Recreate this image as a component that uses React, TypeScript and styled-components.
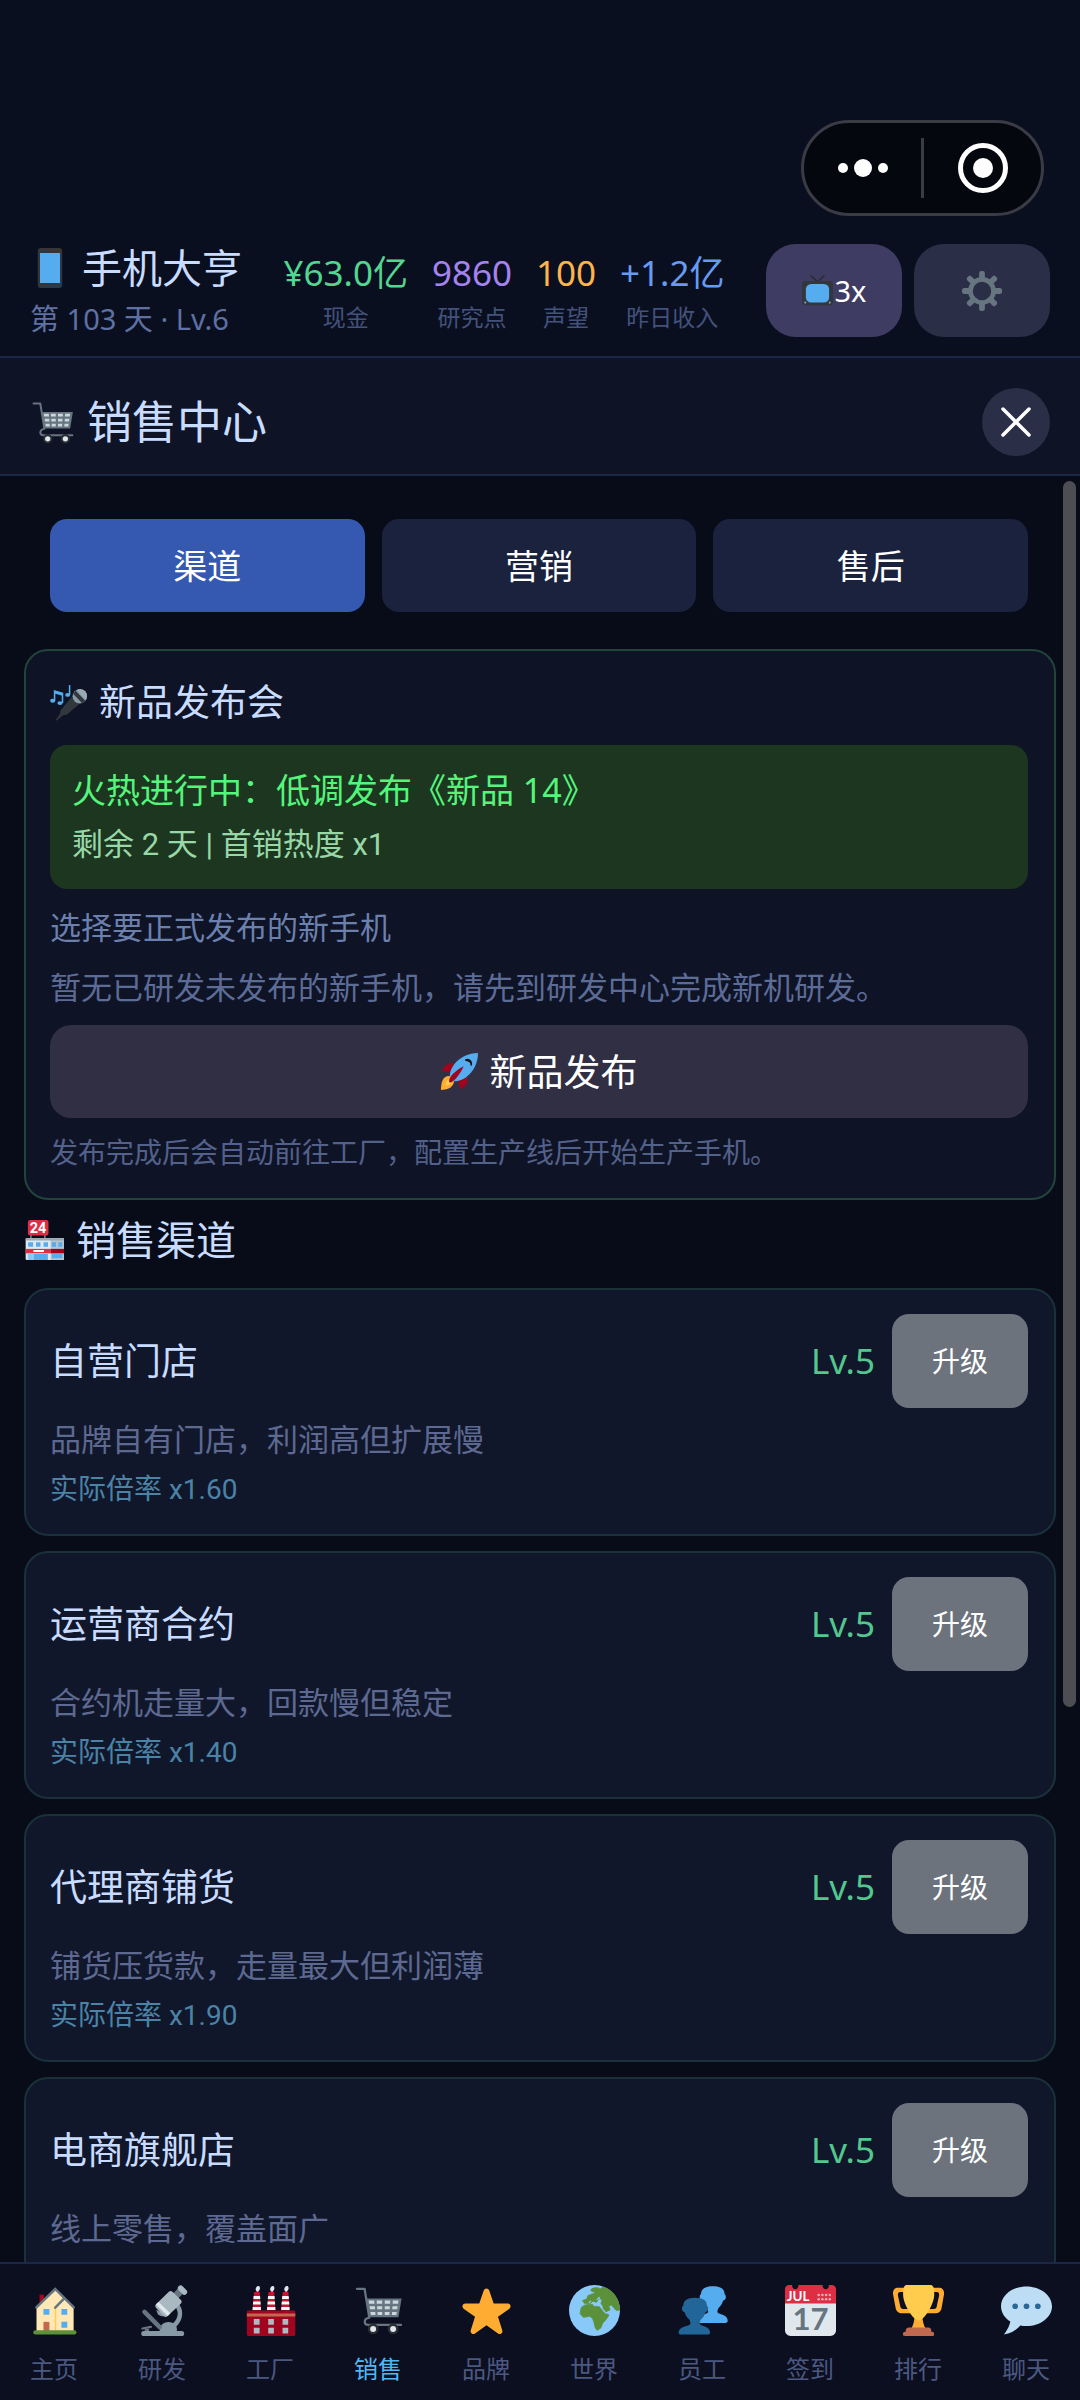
import React, { useState } from "react";
import styled, { createGlobalStyle } from "styled-components";

const GlobalStyle = createGlobalStyle`
  * { box-sizing: border-box; }
  body { margin: 0; background: #080c19; }
  body, button {
    font-family: "Noto Sans", "Noto Sans CJK SC", sans-serif;
    font-weight: 400;
  }
  h1, h2, h3, p { margin: 0; font-weight: 400; }
  button { border: 0; padding: 0; color: #fff; line-height: 44px; cursor: pointer; }
`;

/* ---------- icons ---------- */

const Glyph = styled.svg<{ $size: number }>`
  display: block;
  flex: none;
  width: ${(p) => p.$size}px;
  height: ${(p) => p.$size}px;
`;

type IconProps = { size: number };
type IconType = (p: IconProps) => React.JSX.Element;

const icon =
  (body: React.ReactNode): IconType =>
  ({ size }) => (
    <Glyph $size={size} viewBox="0 0 36 36" aria-hidden="true">
      {body}
    </Glyph>
  );

const PhoneIcon = icon(
  <>
    <rect x="7" y="0" width="22" height="36" rx="3" fill="#31373d" />
    <rect x="9" y="4.500" width="18" height="27" fill="#55acee" />
  </>
);

const TvIcon = icon(
  <>
    <path d="M10.500 1L18 8l7.500-7" stroke="#292f33" strokeWidth="1.800" fill="none" strokeLinecap="round" />
    <rect x="0" y="7" width="36" height="28" rx="4" fill="#31373d" />
    <rect x="4.500" y="10.500" width="27" height="21.500" rx="6" fill="#55acee" />
    <circle cx="3.800" cy="32" r="1.300" fill="#8899a6" />
    <circle cx="32.200" cy="32" r="1.300" fill="#8899a6" />
  </>
);

const GearIcon = icon(
  <>
    <circle cx="18" cy="18" r="10.400" fill="none" stroke="#66757f" strokeWidth="4.200" />
    {[0, 45, 90, 135, 180, 225, 270, 315].map((a) => (
      <rect key={a} x="15.400" y="0" width="5.200" height="8" rx="2" fill="#66757f" transform={`rotate(${a} 18 18)`} />
    ))}
  </>
);

const CartIcon = icon(
  <>
    <path
      d="M2.800 2.700h5.400l3.300 20.400c-2 .3-3.200 1.400-3.200 2.900 0 1.400 1 2.200 2.400 2.200h23.200"
      fill="none"
      stroke="#66757f"
      strokeWidth="1.600"
      strokeLinejoin="round"
      strokeLinecap="round"
    />
    <path d="M9.300 9.500h25l-2.200 13.300H11.300z" fill="#66757f" />
    <g fill="#ccd6dd">
      <path d="M11 11h4l.2 2.200h-3.900zM16.700 11h3.900v2.200h-3.800zM22.400 11h3.900l-.1 2.200h-3.800zM28.100 11h4l-.3 2.200h-3.800z" />
      <path d="M11.700 15h3.700l.2 2.200H12zM17 15h3.600v2.200h-3.500zM22.400 15H26l-.1 2.200h-3.500zM27.900 15h3.600l-.3 2.200h-3.500z" />
      <path d="M12.300 19h3.400l.2 2.200h-3.300zM17.300 19h3.300v2.200h-3.200zM22.400 19h3.400l-.1 2.200h-3.300zM27.600 19h3.300l-.3 2.200h-3.200z" />
    </g>
    <circle cx="14.200" cy="31" r="3.800" fill="#292f33" />
    <circle cx="14.200" cy="31" r="2.100" fill="#e1e8ed" />
    <circle cx="28.300" cy="31" r="3.800" fill="#292f33" />
    <circle cx="28.300" cy="31" r="2.100" fill="#e1e8ed" />
  </>
);

const MicIcon = icon(
  <>
    <path d="M22 11.500l7 7.500-12 10.500c-1.500 1-3 .8-4 .6L6.500 35.700l-.8-.8L10 28.500c-.2-1 0-2.500 1-3.700z" fill="#31373d" />
    <circle cx="29" cy="12" r="7" fill="#8899a6" />
    <path d="M22.500 9.500l2.500-3 9.500 10-3 2.500z" fill="#31373d" />
    <path d="M26 5.800c3-1.800 6.500-.8 8.500 1.400 2 2.400 2 5.800.3 8.300z" fill="#99aab5" />
    <g fill="#55acee">
      <ellipse cx="2.600" cy="16.300" rx="2.500" ry="1.900" />
      <ellipse cx="9.700" cy="18.600" rx="2.500" ry="1.900" />
      <path d="M3.700 5.800l9.200 2.600v10h-1.500v-7.200l-6.200-1.800v7H3.700z" />
      <ellipse cx="17.200" cy="10.600" rx="2.400" ry="1.900" />
      <path d="M18.300 1h1.500v9.600h-1.500z" />
    </g>
  </>
);

const RocketIcon = icon(
  <>
    <path d="M1 17.500C3 12 7 9.500 12.500 9.800L9 19zM18.500 35c5.500-2 8-6 7.700-11.500L17 27z" fill="#a0041e" />
    <path d="M36 0C27 0 18 4 12.500 11.500 9 16.500 8.300 21 8.500 25l2.500 2.500c4 .2 8.500-.5 13.500-4C32 18 36 9 36 0z" fill="#55acee" />
    <path d="M0 36c0-5 .5-12 6-13.500 3.500-.8 7 2.500 6.500 6C11.500 34 5.500 36 0 36z" fill="#ffac33" />
    <path d="M4.500 31.500c0-3.500 1-5.500 3-6 1.800-.3 3.300 1.200 3 3-.6 2-2.500 3-6 3z" fill="#ffcc4d" />
    <path d="M8 28.500c-.5-3 1-5.500 3.500-8 3.200-3 7-6 10.500-7.500-1.500 4-4.200 8-7.300 11.500C12 27.500 10 29 8 28.500z" fill="#a0041e" />
    <path d="M23.800 6.200c3.200-2 7.800 2.200 6.200 5.800-.5 1-1.200 1-1.200 0 0-2.500-1.700-4-4.500-4.200-1 0-1.200-1-.5-1.600z" fill="#101216" />
  </>
);

const StoreIcon = icon(
  <>
    <path d="M5.500 13h1.500v4H5.500zM18 13h1.500v4H18z" fill="#66757f" />
    <rect x="3.500" y="0" width="18.500" height="14" rx="2" fill="#dd2e44" />
    <text x="12.700" y="11.800" textAnchor="middle" fontFamily="Roboto, sans-serif" fontWeight="700" fontSize="13" fill="#fff">
      24
    </text>
    <rect x="1.500" y="16.500" width="34.500" height="19.500" rx="1" fill="#e1e8ed" />
    <path d="M24 16.500h11c.6 0 1 .4 1 1V35c0 .6-.4 1-1 1H24z" fill="#b8c4cc" />
    <path d="M1.500 16.500H36v2H1.500z" fill="#99aab5" />
    <path d="M3.700 20h4.500v4H3.700zM10.800 20h4v4h-4zM17.600 20h4v4h-4zM25 20h3.800v4H25zM31 20h3.500v4H31z" fill="#55acee" />
    <path d="M1.500 26H24v4H1.500z" fill="#dd2e44" />
    <path d="M24 26h12v4H24z" fill="#a0041e" />
    <path d="M8.500 27h9.500v1.800H8.500z" fill="#fff" />
    <path d="M3.500 30.500h4.500V36H3.500z" fill="#88c9f9" />
    <path d="M8.500 30.500h13V36h-13zM25 30.500h9.500V34.500H25z" fill="#55acee" />
  </>
);

const HouseIcon = icon(
  <>
    <path d="M7.400 6.800h3.200V13H7.400z" fill="#a0041e" />
    <path d="M5.300 15L18.500 3l13 12v17.500H5.300z" fill="#ffe8b6" />
    <path d="M18.200 15.500h1v17h-1z" fill="#ffcc4d" />
    <path d="M5.200 15.800L18.500 2.800l13.100 13" fill="none" stroke="#66757f" strokeWidth="1.800" strokeLinecap="round" />
    <path d="M18.500 16l5.900-6" stroke="#66757f" strokeWidth="1.800" strokeLinecap="round" />
    <path d="M10.200 17h4.200v4h-4.200zM22.900 17H27v4h-4.100zM22.900 26H27v4.200h-4.100z" fill="#55acee" />
    <path d="M10.200 26h4.200v6.500h-4.200z" fill="#c1694f" />
    <rect x="3" y="32" width="30.500" height="3" rx="1.500" fill="#5c913b" />
  </>
);

const MicroscopeIcon = icon(
  <>
    <path d="M28.500 14.500c3.500 5.500 1.800 11-4 15.500" fill="none" stroke="#8899a6" strokeWidth="3.200" />
    <path d="M16 33c-.5-4 2.500-6.800 6.200-6.800S29 29 28 33z" fill="#8899a6" />
    <path d="M5.300 19L16 29.700" stroke="#66757f" strokeWidth="3.200" strokeLinecap="round" />
    <path d="M3.800 30.700l6-1.200" stroke="#66757f" strokeWidth="1.600" strokeLinecap="round" />
    <path d="M5.500 31h3v2.500h-3z" fill="#66757f" />
    <path d="M13.500 17.500l1.300 3.300c1.400 1 2.800 1.400 4.400 1.300l1.300-1z" fill="#8899a6" />
    <path d="M26.500 8.500l4-4" stroke="#66757f" strokeWidth="5" />
    <path d="M22.500 4.800c.8-.8 1.800-.8 2.500 0l6 5.700c.7.7.7 1.700 0 2.500l-9.500 9c-.8.8-1.700.7-2.500 0l-5.600-6c-.7-.8-.7-1.600 0-2.400z" fill="#aab8c2" />
    <path d="M15.200 12l8.300 8-1.800 1.800-8.300-8z" fill="#e1e8ed" />
    <path d="M30.800 2.300l2.600 2.600" stroke="#aab8c2" strokeWidth="4" strokeLinecap="round" />
    <rect x="3" y="32.400" width="30.300" height="3.600" rx="1.800" fill="#8899a6" />
  </>
);

const FactoryIcon = icon(
  <>
    {[5.2, 15.4, 25.4].map((x) => (
      <g key={x} transform={`translate(${x} 0)`}>
        <path d="M1.200 5h4L6.100 18H0z" fill="#be1931" />
        <path d="M.9 7.800h4.500l.2 2H.7zM.6 11.700h5.100l.2 2H.4zM.3 15.500H6l.1 2.200H.1z" fill="#f5f8fa" />
        <path d="M3.200 4.800c-1-1-1.200-2.200-.4-3.200C3.600.4 5 .5 5.300 1.800c.3 1.300-.5 2-1.100 3z" fill="#e1e8ed" />
      </g>
    ))}
    <rect x="1.300" y="18" width="34.200" height="18" rx="1" fill="#a0041e" />
    <path d="M1.300 20.200h34.200v2H1.300z" fill="#c1694f" />
    <path d="M6.200 24h4.100v4H6.200zM16.400 24h4v4h-4zM26.500 24h4v4h-4zM6.200 30.200h4.100v4H6.200zM16.400 30.200h4v4h-4zM26.500 30.200h4v4h-4z" fill="#b0b8c2" />
  </>
);

const StarIcon = icon(
  <path
    fill="#ffac33"
    d="M27.287 34.627c-.404 0-.806-.124-1.152-.371L18 28.422l-8.135 5.834c-.343.247-.746.371-1.148.371-.403 0-.806-.124-1.150-.371-.694-.5-.987-1.386-.73-2.198l3.060-9.673-8.082-5.699c-.693-.502-.982-1.392-.72-2.204.261-.812 1.011-1.363 1.859-1.369l9.941-.015L16.120 3.750c.27-.809 1.027-1.350 1.880-1.350s1.610.541 1.880 1.350l3.168 9.348 9.993.015c.852.005 1.602.557 1.863 1.370.261.812-.028 1.701-.718 2.203l-8.083 5.699 3.061 9.674c.257.812-.036 1.698-.73 2.198-.344.246-.744.37-1.147.37z"
  />
);

const GlobeIcon = icon(
  <>
    <circle cx="18" cy="18" r="18" fill="#88c9f9" />
    <g fill="#5c913b" stroke="#5c913b" strokeWidth=".6" strokeLinejoin="round">
      <path d="M8.700 15.800L11.300 14.100l5.200-.5.700 1.400 5.200.5 1.400 3.100 2.300 1.600 2.100 1-2.100 3.300-2.300 2.300-1.400 3.600-2.400 1.600-1.400-1.600-1-4.300-.9-2.300-1.900-1.700-4.700.7-2.300-2.600z" />
      <path d="M15.300 3.300l1.900-1.200 2.800-.2 2.400.7 1.800-1.100C31 3.500 35.600 9.800 35.700 17.800l-2.500.1-1.400-1.700-1.800-2.100-2 .7 1 2.700-3 2-2-2.500V15l-1.500-2 1-2.500-2.800-.6-1.200 2.300-2.600-.8-2.100 1.600-4-.1L9.600 11l2.900-1.100.9-2.400 3.800-1.400 1.400-.9-2.600-.7z" />
    </g>
    <path d="M22 15l4 4.800 2.500-1.200" fill="none" stroke="#88c9f9" strokeWidth=".9" />
    <path d="M19.500 10.500l1.700-1.700 1 2.200M14 12.300l1.500-1" fill="none" stroke="#88c9f9" strokeWidth=".8" />
  </>
);

const person =
  "M16 27.500c0-1.500.5-2.600 1-3.300 1.300-1.100 2.600-3 3.100-5 1-.1 1.900-1.200 1.900-2.400 0-1-.3-1.800-.9-2.100C21.200 11 18.500 9 12.800 9S4.600 11 4.400 14.700c-.6.3-.9 1.100-.9 2.100 0 1.200.8 2.300 1.900 2.400.5 2 1.800 3.900 3.100 5 .5.7 1 1.800 1 3.300C7.500 29.500 1.200 29 1.200 33.500c0 1 .5 1.500 1.500 1.500h19c1 0 1.600-.5 1.600-1.500 0-4.500-5.300-4-7.300-6z";

const PeopleIcon = icon(
  <>
    <path d={person} fill="#55acee" transform="translate(12.500 -8.200)" />
    <path d={person} fill="#226699" />
  </>
);

const CalendarIcon = icon(
  <>
    <path d="M0 12h36v20c0 2.200-1.800 4-4 4H4c-2.200 0-4-1.800-4-4z" fill="#e1e8ed" />
    <path d="M3 0h2c0 4 4.500 4 4.500 0h17c0 4 4.500 4 4.500 0h2c1.700 0 3 1.300 3 3v10H0V3c0-1.700 1.300-3 3-3z" fill="#dd2e44" />
    <text x="9.200" y="11.100" textAnchor="middle" fontFamily="Lato, sans-serif" fontWeight="700" fontSize="9.500" fill="#fff">
      JUL
    </text>
    <g fill="#f4abba">
      {[23.8, 26.4, 29, 31.6].map((x) => (
        <React.Fragment key={x}>
          <circle cx={x} cy="7" r=".9" />
          <circle cx={x} cy="10" r=".9" />
        </React.Fragment>
      ))}
    </g>
    <text x="18" y="31.900" textAnchor="middle" fontFamily="Lato, sans-serif" fontWeight="700" fontSize="22" fill="#66757f">
      17
    </text>
  </>
);

const TrophyIcon = icon(
  <>
    <path
      fill="#ffac33"
      d="M5.123 5h6C12.227 5 13 4.896 13 6V4c0-1.104-.773-2-1.877-2h-8c-2 0-3.583 2.125-3 5 0 0 1.791 9.375 1.917 9.958C2.373 18.500 4.164 20 6.081 20h6.958c1.105 0-.039-1.896-.039-3v-2c0 1.104-.773 2-1.877 2h-4c-1.104 0-1.833-1.042-2-2S3.539 7.667 3.539 7.667C3.206 5.750 4.018 5 5.123 5zm25.812 0h-6C23.831 5 22 4.896 22 6V4c0-1.104 1.831-2 2.935-2h8c2 0 3.584 2.125 3 5 0 0-1.633 9.419-1.771 10-.354 1.500-2.042 3-4 3h-7.146C21.914 20 22 18.104 22 17v-2c0 1.104 1.831 2 2.935 2h4c1.104 0 1.834-1.042 2-2s1.584-7.333 1.584-7.333C32.851 5.750 32.040 5 30.935 5zM20.832 22c0-6.958-2.709 0-2.709 0s-3-6.958-3 0-3.291 10-3.291 10h12.292c-.001 0-3.292-3.042-3.292-10z"
    />
    <path fill="#ffcc4d" d="M29.123 6.577c0 6.775-6.770 18.423-11 18.423-4.231 0-11-11.649-11-18.423C7.123.795 8.248 0 10.123 0h16c1.763 0 3 .577 3 6.577z" />
    <path fill="#c1694f" d="M27 34H9v-2c0-1.104 1.164-2 2.206-2h13.917c1.042 0 1.877.896 1.877 2z" />
    <path fill="#c1694f" d="M29 34.625c0 .76.165 1.375-1.252 1.375H8.498C7.206 36 7 35.385 7 34.625v-.25C7 33.615 7.738 33 8.498 33h19.250c.759 0 1.252.615 1.252 1.375z" />
  </>
);

const ChatIcon = icon(
  <>
    <path fill="#bdddf4" d="M18 1C8.059 1 0 7.268 0 15c0 4.368 2.574 8.268 6.604 10.835C6.080 28.144 4.859 31.569 2 35c5.758-.96 9.439-3.761 11.716-6.416 1.376.271 2.806.416 4.284.416 9.941 0 18-6.268 18-14S27.941 1 18 1z" />
    <g fill="#2a6797">
      <circle cx="10" cy="15" r="2" />
      <circle cx="18" cy="15" r="2" />
      <circle cx="26" cy="15" r="2" />
    </g>
  </>
);

/* ---------- layout ---------- */

const Page = styled.div`
  display: flex;
  flex-direction: column;
  height: 100vh;
  overflow: hidden;
  background: #080c19;
`;

const Header = styled.header`
  flex: none;
  padding: 120px 30px 19px;
  border-bottom: 2px solid #1c2748;
  background: #0a0f20;
`;

const CapsuleRow = styled.div`
  display: flex;
  justify-content: flex-end;
  padding-right: 6px;
  margin-bottom: 28px;
`;

const Capsule = styled.div`
  display: flex;
  align-items: center;
  width: 243px;
  height: 96px;
  border: 3px solid #3a3b45;
  border-radius: 48px;
  background: #05070f;
`;

const CapsuleButton = styled.button`
  display: flex;
  flex: 1;
  align-items: center;
  justify-content: center;
  height: 100%;
  background: none;
`;

const CapsuleDivider = styled.span`
  width: 3px;
  height: 60px;
  background: #3a3b45;
`;

const HeaderRow = styled.div`
  display: flex;
  align-items: center;
  justify-content: space-between;
`;

const Brand = styled.div`
  display: flex;
  flex-direction: column;
  gap: 9px;
`;

const IconText = styled.span`
  display: flex;
  align-items: center;
  gap: 12px;
`;

const BrandName = styled.h1`
  color: #c8dcff;
  font-size: 40px;
  line-height: 48px;
`;

const BrandSub = styled.p`
  color: #5f71a3;
  font-size: 29px;
  line-height: 36px;
`;

const Stats = styled.div`
  display: flex;
  gap: 24px;
  padding-top: 4px;
`;

const Stat = styled.div`
  display: flex;
  flex-direction: column;
  align-items: center;
  gap: 4px;
`;

const StatValue = styled.span<{ $color: string }>`
  color: ${(p) => p.$color};
  font-size: 35px;
  line-height: 44px;
`;

const StatLabel = styled.span`
  color: #43527c;
  font-size: 23px;
  line-height: 36px;
`;

const HeaderActions = styled.div`
  display: flex;
  gap: 12px;
`;

const ActionButton = styled.button<{ $bg: string }>`
  display: flex;
  align-items: center;
  justify-content: center;
  gap: 2px;
  width: 136px;
  height: 93px;
  border-radius: 30px;
  background: ${(p) => p.$bg};
  font-size: 29px;
`;

const PanelHeader = styled.div`
  display: flex;
  flex: none;
  align-items: center;
  justify-content: space-between;
  padding: 30px 30px 18px;
  border-bottom: 2px solid #1c2748;
  background: #0e1326;
`;

const PanelTitle = styled.h2`
  color: #c8dcff;
  font-size: 45px;
  line-height: 64px;
`;

const CloseButton = styled.button`
  display: flex;
  align-items: center;
  justify-content: center;
  width: 68px;
  height: 68px;
  border-radius: 50%;
  background: #2a2e47;
`;

const Body = styled.main`
  position: relative;
  flex: 1;
  min-height: 0;
`;

const Scroller = styled.div`
  height: 100%;
  padding: 43px 24px 24px;
  overflow-y: auto;
  scrollbar-width: none;
`;

const ScrollThumb = styled.div`
  position: absolute;
  top: 5px;
  right: 4px;
  width: 13px;
  height: calc(69% - 6px);
  border-radius: 7px;
  background: #4d4e53;
`;

const Tabs = styled.div`
  display: flex;
  gap: 17px;
  padding: 0 28px 0 26px;
  margin-bottom: 37px;
`;

const Tab = styled.button<{ $active: boolean }>`
  flex: 1;
  height: 93px;
  border-radius: 17px;
  background: ${(p) => (p.$active ? "#3559b1" : "#1b223e")};
  font-size: 34px;
`;

const LaunchCard = styled.section`
  display: flex;
  flex-direction: column;
  gap: 16px;
  padding: 24px 26px 24px 24px;
  border: 2px solid #21453a;
  border-radius: 24px;
  background: #0e1326;
`;

const CardTitle = styled.h3`
  color: #c8dcff;
  font-size: 37px;
  line-height: 54px;
`;

const Notice = styled.div`
  display: flex;
  flex-direction: column;
  gap: 10px;
  padding: 22px;
  border-radius: 17px;
  background: #1c3620;
`;

const NoticeTitle = styled.p`
  color: #55f57c;
  font-size: 34px;
  line-height: 46px;
`;

const NoticeText = styled.p`
  color: #98d7a6;
  font-family: Roboto, "Noto Sans CJK SC", sans-serif;
  font-size: 31px;
  line-height: 44px;
`;

const BodyText = styled.p<{ $color: string }>`
  color: ${(p) => p.$color};
  font-size: 31px;
  line-height: 44px;
`;

const SmallText = styled.p<{ $color: string }>`
  color: ${(p) => p.$color};
  font-family: Roboto, "Noto Sans CJK SC", sans-serif;
  font-size: 28px;
  line-height: 40px;
`;

const LaunchButton = styled.button`
  display: flex;
  align-items: center;
  justify-content: center;
  gap: 12px;
  height: 93px;
  border-radius: 21px;
  background: #302f43;
  font-size: 37px;
`;

const SectionTitle = styled.h3`
  margin: 12px 0 20px;
  color: #c8dcff;
  font-size: 40px;
  line-height: 56px;
`;

const ChannelList = styled.div`
  display: flex;
  flex-direction: column;
  gap: 15px;
`;

const ChannelCard = styled.article`
  display: flex;
  flex-direction: column;
  gap: 9px;
  min-height: 248px;
  padding: 24px 26px 24px 24px;
  border: 2px solid #1a3139;
  border-radius: 24px;
  background: #11172b;
`;

const ChannelTop = styled.div`
  display: flex;
  align-items: center;
  gap: 17px;
`;

const ChannelName = styled.h3`
  flex: 1;
  color: #c8dcff;
  font-size: 37px;
  line-height: 54px;
`;

const Level = styled.span`
  color: #53c78d;
  font-size: 35px;
  line-height: 44px;
`;

const UpgradeButton = styled.button`
  width: 136px;
  height: 94px;
  border-radius: 17px;
  background: #6c737d;
  font-size: 28px;
`;

const Nav = styled.nav`
  display: flex;
  flex: none;
  padding: 21px 0 15px;
  border-top: 2px solid #1c2748;
  background: #0c0f20;
`;

const NavItem = styled.a<{ $active: boolean }>`
  display: flex;
  flex: 1;
  flex-direction: column;
  align-items: center;
  gap: 17px;
  color: ${(p) => (p.$active ? "#4fb7f5" : "#4b5880")};
  font-size: 24px;
  line-height: 32px;
  text-decoration: none;
`;

const stats = [
  { value: "¥63.0亿", label: "现金", color: "#53d68f" },
  { value: "9860", label: "研究点", color: "#a583ee" },
  { value: "100", label: "声望", color: "#fdb44c" },
  { value: "+1.2亿", label: "昨日收入", color: "#669bf2" },
];

const tabs = ["渠道", "营销", "售后"];

const channels: { name: string; desc: string; rate?: string }[] = [
  { name: "自营门店", desc: "品牌自有门店，利润高但扩展慢", rate: "1.60" },
  { name: "运营商合约", desc: "合约机走量大，回款慢但稳定", rate: "1.40" },
  { name: "代理商铺货", desc: "铺货压货款，走量最大但利润薄", rate: "1.90" },
  { name: "电商旗舰店", desc: "线上零售，覆盖面广" },
];

const navItems: { label: string; Icon: IconType }[] = [
  { label: "主页", Icon: HouseIcon },
  { label: "研发", Icon: MicroscopeIcon },
  { label: "工厂", Icon: FactoryIcon },
  { label: "销售", Icon: CartIcon },
  { label: "品牌", Icon: StarIcon },
  { label: "世界", Icon: GlobeIcon },
  { label: "员工", Icon: PeopleIcon },
  { label: "签到", Icon: CalendarIcon },
  { label: "排行", Icon: TrophyIcon },
  { label: "聊天", Icon: ChatIcon },
];

export default function App() {
  const [tab, setTab] = useState("渠道");

  return (
    <Page>
      <GlobalStyle />
      <Header>
        <CapsuleRow>
          <Capsule>
            <CapsuleButton aria-label="更多">
              <svg width="52" height="20" viewBox="0 0 52 20" fill="#fff">
                <circle cx="6" cy="10" r="5" />
                <circle cx="26" cy="10" r="9" />
                <circle cx="46" cy="10" r="5" />
              </svg>
            </CapsuleButton>
            <CapsuleDivider />
            <CapsuleButton aria-label="退出">
              <svg width="50" height="50" viewBox="0 0 50 50">
                <circle cx="25" cy="25" r="22.500" fill="none" stroke="#fff" strokeWidth="5" />
                <circle cx="25" cy="25" r="10" fill="#fff" />
              </svg>
            </CapsuleButton>
          </Capsule>
        </CapsuleRow>
        <HeaderRow>
          <Brand>
            <BrandName>
              <IconText>
                <PhoneIcon size={40} />
                手机大亨
              </IconText>
            </BrandName>
            <BrandSub>第 103 天 · Lv.6</BrandSub>
          </Brand>
          <Stats>
            {stats.map((s) => (
              <Stat key={s.label}>
                <StatValue $color={s.color}>{s.value}</StatValue>
                <StatLabel>{s.label}</StatLabel>
              </Stat>
            ))}
          </Stats>
          <HeaderActions>
            <ActionButton $bg="#3f3c63">
              <TvIcon size={31} />
              3x
            </ActionButton>
            <ActionButton $bg="#2a2e47" aria-label="设置">
              <GearIcon size={40} />
            </ActionButton>
          </HeaderActions>
        </HeaderRow>
      </Header>

      <PanelHeader>
        <PanelTitle>
          <IconText>
            <CartIcon size={45} />
            销售中心
          </IconText>
        </PanelTitle>
        <CloseButton aria-label="关闭">
          <svg width="32" height="32" viewBox="0 0 32 32" stroke="#fff" strokeWidth="3.500" strokeLinecap="round">
            <path d="M3 3l26 26M29 3L3 29" />
          </svg>
        </CloseButton>
      </PanelHeader>

      <Body>
        <Scroller>
          <Tabs>
            {tabs.map((t) => (
              <Tab key={t} $active={t === tab} onClick={() => setTab(t)}>
                {t}
              </Tab>
            ))}
          </Tabs>

          <LaunchCard>
            <CardTitle>
              <IconText>
                <MicIcon size={37} />
                新品发布会
              </IconText>
            </CardTitle>
            <Notice>
              <NoticeTitle>火热进行中：低调发布《新品 14》</NoticeTitle>
              <NoticeText>剩余 2 天 | 首销热度 x1</NoticeText>
            </Notice>
            <BodyText $color="#6c80ae">选择要正式发布的新手机</BodyText>
            <BodyText $color="#5d6c96">暂无已研发未发布的新手机，请先到研发中心完成新机研发。</BodyText>
            <LaunchButton>
              <RocketIcon size={37} />
              新品发布
            </LaunchButton>
            <SmallText $color="#53618a">发布完成后会自动前往工厂，配置生产线后开始生产手机。</SmallText>
          </LaunchCard>

          <SectionTitle>
            <IconText>
              <StoreIcon size={40} />
              销售渠道
            </IconText>
          </SectionTitle>

          <ChannelList>
            {channels.map((c) => (
              <ChannelCard key={c.name}>
                <ChannelTop>
                  <ChannelName>{c.name}</ChannelName>
                  <Level>Lv.5</Level>
                  <UpgradeButton>升级</UpgradeButton>
                </ChannelTop>
                <BodyText $color="#5d6990">{c.desc}</BodyText>
                {c.rate && <SmallText $color="#4a83a6">实际倍率 x{c.rate}</SmallText>}
              </ChannelCard>
            ))}
          </ChannelList>
        </Scroller>
        <ScrollThumb />
      </Body>

      <Nav>
        {navItems.map(({ label, Icon }) => (
          <NavItem key={label} href="#" $active={label === "销售"}>
            <Icon size={51} />
            {label}
          </NavItem>
        ))}
      </Nav>
    </Page>
  );
}
